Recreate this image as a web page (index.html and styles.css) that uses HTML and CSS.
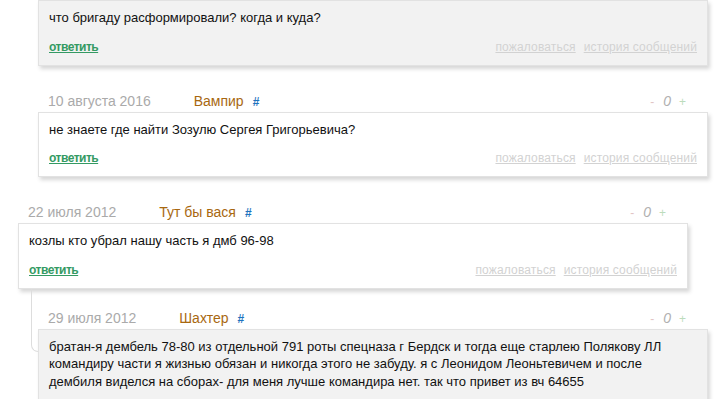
FILE: index.html
```html
<!DOCTYPE html>
<html lang="ru">
<head>
    <meta charset="UTF-8">
    <title>Комментарии</title>
    <link rel="stylesheet" href="styles.css">
</head>
<body>
    <div class="comments">
        <div class="replies">
            <div class="comment">
                <div class="card grey">
                    <div class="text">что бригаду расформировали? когда и куда?</div>
                    <div class="actions">
                        <a href="#" class="reply-link">ответить</a>
                        <div class="tools">
                            <a href="#">пожаловаться</a>
                            <a href="#">история сообщений</a>
                        </div>
                    </div>
                </div>
            </div>

            <div class="comment">
                <div class="meta">
                    <span class="date">10 августа 2016</span>
                    <span class="author">Вампир</span>
                    <a href="#" class="anchor">#</a>
                    <span class="votes"><span class="minus">-</span><span class="score">0</span><span class="plus">+</span></span>
                </div>
                <div class="card">
                    <div class="text">не знаете где найти Зозулю Сергея Григорьевича?</div>
                    <div class="actions">
                        <a href="#" class="reply-link">ответить</a>
                        <div class="tools">
                            <a href="#">пожаловаться</a>
                            <a href="#">история сообщений</a>
                        </div>
                    </div>
                </div>
            </div>
        </div>

        <div class="comment top">
            <div class="meta">
                <span class="date">22 июля 2012</span>
                <span class="author">Тут бы вася</span>
                <a href="#" class="anchor">#</a>
                <span class="votes"><span class="minus">-</span><span class="score">0</span><span class="plus">+</span></span>
            </div>
            <div class="card">
                <div class="text">козлы кто убрал нашу часть я дмб 96-98</div>
                <div class="actions">
                    <a href="#" class="reply-link">ответить</a>
                    <div class="tools">
                        <a href="#">пожаловаться</a>
                        <a href="#">история сообщений</a>
                    </div>
                </div>
            </div>

            <div class="replies linked">
                <span class="thread-line"></span>
                <div class="comment">
                    <div class="meta">
                        <span class="date">29 июля 2012</span>
                        <span class="author">Шахтер</span>
                        <a href="#" class="anchor">#</a>
                        <span class="votes"><span class="minus">-</span><span class="score">0</span><span class="plus">+</span></span>
                    </div>
                    <div class="card grey">
                        <div class="text">братан-я дембель 78-80 из отдельной 791 роты спецназа г Бердск и тогда еще старлею Полякову ЛЛ командиру части я жизнью обязан и никогда этого не забуду. я с Леонидом Леоньтевичем и после дембиля виделся на сборах- для меня лучше командира нет. так что привет из вч 64655</div>
                    </div>
                </div>
            </div>
        </div>
    </div>
</body>
</html>
```

FILE: styles.css
```css
body {
    margin: 0;
    background-color: #ffffff;
    font-family: "Liberation Sans", Arial, sans-serif;
    color: #111111;
    overflow: hidden;
}

.comments {
    padding-left: 18px;
}

.replies {
    position: relative;
    padding-left: 20px;
}

.comment + .comment {
    margin-top: 25px;
}

.replies + .comment {
    margin-top: 25px;
}

.linked {
    padding-top: 19px;
}

/* the little elbow that joins a reply to its parent */
.thread-line {
    position: absolute;
    left: 13px;
    top: 0;
    width: 6px;
    height: 62px;
    border-left: 1px solid #dddddd;
    border-bottom: 1px solid #dddddd;
    border-bottom-left-radius: 7px;
}

.meta {
    display: flex;
    align-items: baseline;
    width: 670px;
    height: 21px;
    line-height: 20px;
    padding-left: 10px;
    box-sizing: border-box;
}

.date {
    font-size: 14px;
    color: #aaaaaa;
    margin-right: 43px;
}

.author {
    font-size: 14px;
    color: #a86810;
}

.anchor {
    font-size: 12px;
    font-weight: bold;
    color: #1e73be;
    text-decoration: none;
    margin-left: 9px;
}

.votes {
    margin-left: auto;
    padding-right: 22px;
    display: flex;
    align-items: baseline;
}

.minus {
    font-size: 12px;
    color: #e2c4c4;
}

.score {
    font-size: 14px;
    font-style: italic;
    color: #b0b0b0;
    margin: 0 8px 0 9px;
}

.plus {
    font-size: 12px;
    color: #bcdcbc;
}

.card {
    width: 670px;
    box-sizing: border-box;
    background-color: #ffffff;
    border: 1px solid #e2e2e2;
    padding: 8px 10px 10px;
    box-shadow: 2px 3px 4px rgba(0, 0, 0, 0.16);
}

.card.grey {
    background-color: #f2f2f2;
}

.text {
    font-size: 13px;
    line-height: 17.5px;
}

.actions {
    display: flex;
    justify-content: space-between;
    align-items: baseline;
    margin-top: 12px;
    line-height: 16px;
}

.reply-link {
    font-size: 12px;
    font-weight: bold;
    letter-spacing: -0.5px;
    color: #349a63;
}

.tools {
    display: flex;
    gap: 8px;
}

.tools a {
    font-size: 12px;
    letter-spacing: 0.15px;
    color: #d2d2d2;
}
```
